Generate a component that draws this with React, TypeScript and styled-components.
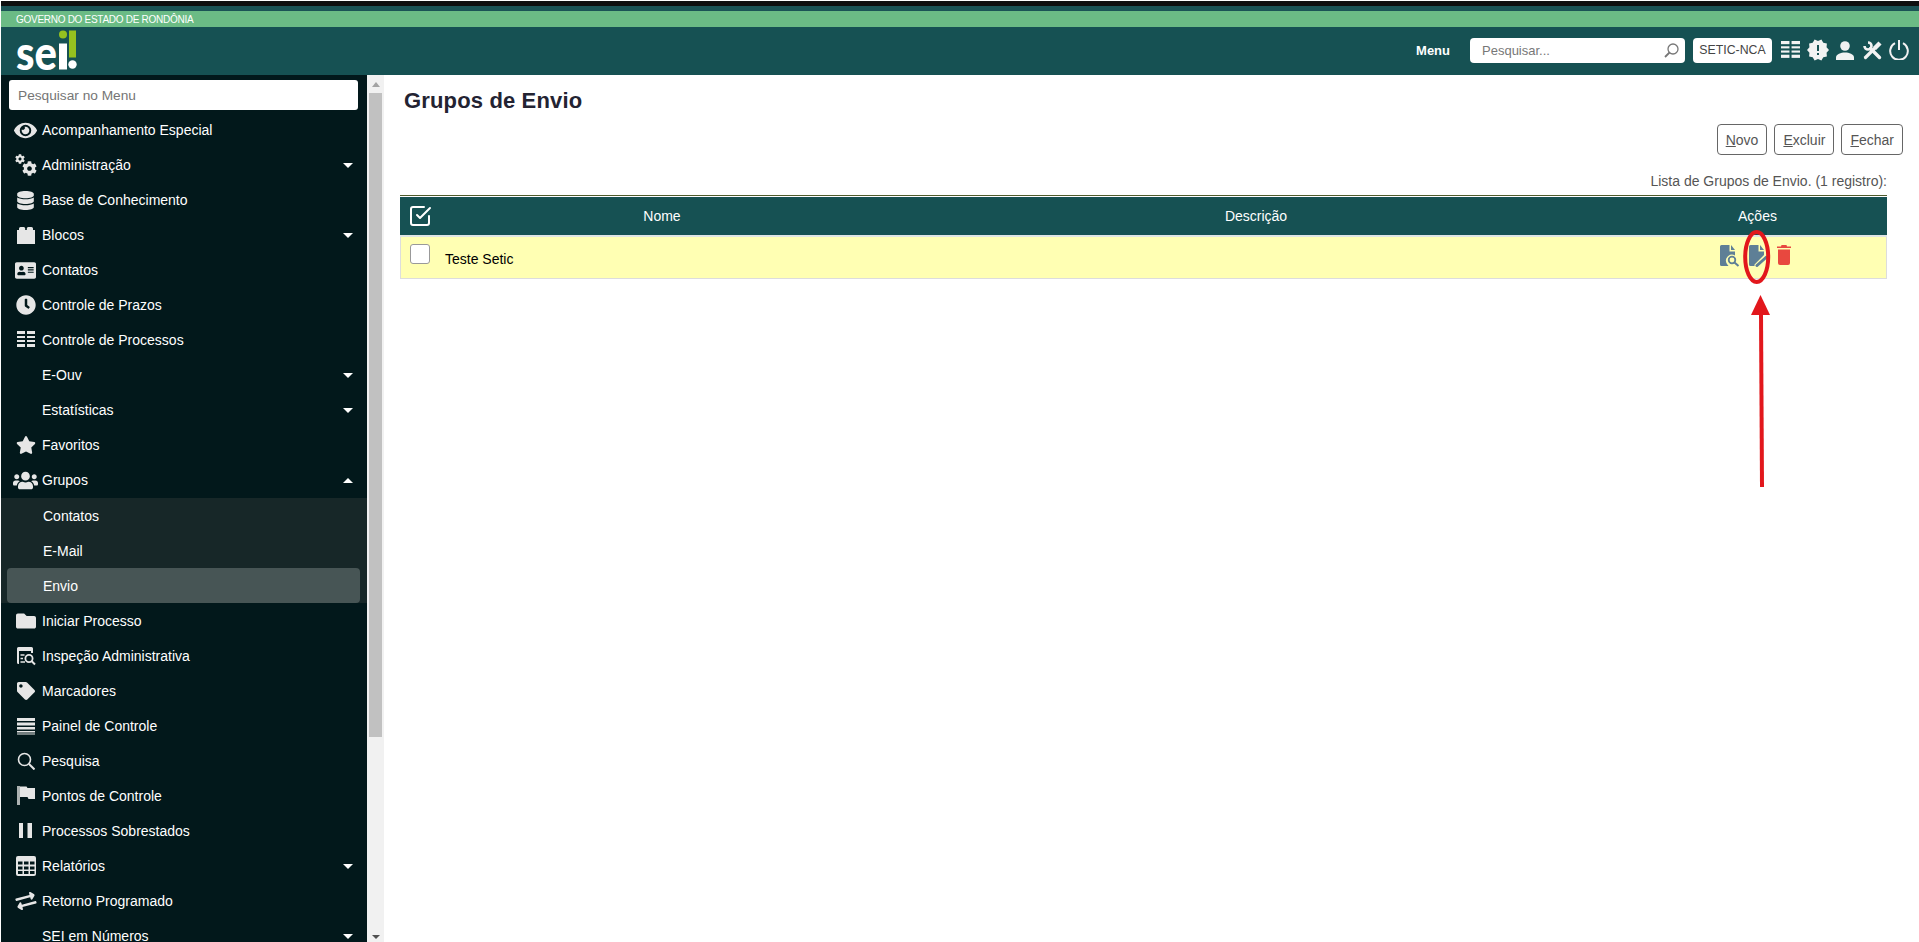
import React from "react";
import styled, { createGlobalStyle } from "styled-components";
import {
  FaAddressCard,
  FaClock,
  FaCog,
  FaDatabase,
  FaExchangeAlt,
  FaEye,
  FaFolder,
  FaStar,
  FaTag,
  FaUsers,
} from "react-icons/fa";
import { FiCheckSquare } from "react-icons/fi";
import { MdNewReleases } from "react-icons/md";

const GlobalStyle = createGlobalStyle`
  html, body {
    margin: 0;
    padding: 0;
    height: 100%;
    overflow: hidden;
    background: #fff;
    font-family: "Liberation Sans", Arial, sans-serif;
  }
  #root {
    height: 100%;
  }
`;

const Page = styled.div`
  height: 100vh;
  display: flex;
  flex-direction: column;
  padding: 1px 0 0 1px;
  box-sizing: border-box;
  overflow: hidden;
`;

const BlackStrip = styled.div`
  height: 5px;
  flex: none;
  background: #0f0f0f;
`;

const TealStrip = styled.div`
  height: 5px;
  flex: none;
  background: #1b5355;
`;

const GovBar = styled.div`
  height: 16px;
  flex: none;
  display: flex;
  align-items: center;
  padding-left: 15px;
  background: #6bbb85;
  color: #fff;
  font-size: 10px;
  letter-spacing: -0.28px;
`;

const Header = styled.header`
  height: 48px;
  flex: none;
  display: flex;
  align-items: center;
  padding: 0 10px 0 15px;
  background: #165153;
`;

const Logo = styled.svg`
  width: 62px;
  height: 42px;
  margin-top: -1px;
  overflow: visible;
`;

const HeaderRight = styled.div`
  margin-left: auto;
  margin-bottom: 2px;
  display: flex;
  align-items: center;
`;

const MenuLabel = styled.span`
  color: #fff;
  font-size: 13px;
  font-weight: 700;
  margin-right: 20px;
`;

const SearchBox = styled.div`
  width: 215px;
  height: 25px;
  box-sizing: border-box;
  display: flex;
  align-items: center;
  justify-content: space-between;
  padding: 0 6px 0 12px;
  background: #fff;
  border-radius: 4px;
  color: #777;
  font-size: 13px;
  margin-right: 8px;
`;

const Unit = styled.div`
  width: 79px;
  height: 25px;
  display: flex;
  align-items: center;
  justify-content: center;
  background: #fff;
  border-radius: 4px;
  color: #444;
  font-size: 12.3px;
  margin-right: 9px;
`;

const HeaderIcons = styled.div`
  display: flex;
  align-items: center;
  gap: 6px;
  color: #f2f2f2;
  height: 25px;
`;

const ToolsSvg = styled.svg`
  margin: 0 1px 0 3px;
`;

const Body = styled.div`
  flex: 1;
  min-height: 0;
  display: flex;
`;

const Sidebar = styled.nav`
  width: 366px;
  flex: none;
  box-sizing: border-box;
  padding-top: 5px;
  background: #02181b;
  overflow: hidden;
`;

const MenuSearch = styled.div`
  height: 30px;
  margin: 0 9px 2.5px 8px;
  box-sizing: border-box;
  display: flex;
  align-items: center;
  padding-left: 9px;
  background: #fff;
  border-radius: 3px;
  color: #757575;
  font-size: 13.7px;
`;

const MenuItem = styled.div<{ $active?: boolean; $sub?: boolean }>`
  height: 35.05px;
  display: flex;
  align-items: center;
  box-sizing: border-box;
  padding-right: 14px;
  padding-left: ${(p) => (p.$active ? 36 : p.$sub ? 42 : 12)}px;
  margin: 0 ${(p) => (p.$active ? 7 : 0)}px 0 ${(p) => (p.$active ? 6 : 0)}px;
  background: ${(p) => (p.$active ? "#475555" : "transparent")};
  border-radius: ${(p) => (p.$active ? 4 : 0)}px;
  color: #fff;
  font-size: 14px;
  white-space: nowrap;
`;

const MenuIcon = styled.span`
  width: 25px;
  height: 24px;
  margin-right: 4px;
  flex: none;
  display: flex;
  align-items: center;
  justify-content: center;
  color: #e6e6e6;
`;

const TiltedExchange = styled(FaExchangeAlt)`
  transform: rotate(-15deg);
`;

const Caret = styled.span<{ $up?: boolean }>`
  margin-left: auto;
  width: 0;
  height: 0;
  border-left: 5px solid transparent;
  border-right: 5px solid transparent;
  border-top: ${(p) => (p.$up ? "0" : "5px solid #fff")};
  border-bottom: ${(p) => (p.$up ? "5px solid #fff" : "0")};
`;

const SubMenu = styled.div`
  background: #172728;
`;

const ScrollTrack = styled.div`
  width: 17px;
  flex: none;
  display: flex;
  flex-direction: column;
  align-items: center;
  background: #f1f1f1;
`;

const ScrollArrow = styled.span<{ $down?: boolean }>`
  flex: none;
  width: 0;
  height: 0;
  margin: ${(p) => (p.$down ? "auto 0 3px" : "7px 0 6px")};
  border-left: 4px solid transparent;
  border-right: 4px solid transparent;
  border-top: ${(p) => (p.$down ? "4px solid #505050" : "0")};
  border-bottom: ${(p) => (p.$down ? "0" : "5px solid #a3a3a3")};
`;

const ScrollThumb = styled.div`
  width: 13px;
  height: 644px;
  flex: none;
  background: #c1c1c1;
`;

const Main = styled.main`
  position: relative;
  flex: 1;
  min-width: 0;
  box-sizing: border-box;
  padding: 0 32px 0 16px;
  color: #333;
`;

const Title = styled.h1`
  margin: 13px 0 0 4px;
  height: 26px;
  font-size: 22px;
  line-height: 26px;
  font-weight: 700;
  letter-spacing: 0.15px;
  color: #232332;
`;

const ButtonRow = styled.div`
  display: flex;
  justify-content: flex-end;
  gap: 7px;
  margin: 10px -16px 0 0;
`;

const Button = styled.button`
  height: 31px;
  box-sizing: border-box;
  padding: 0 8px;
  background: #fff;
  border: 1px solid #666;
  border-radius: 4px;
  color: #555;
  font-family: inherit;
  font-size: 14px;
  u {
    text-underline-offset: 1px;
  }
`;

const Caption = styled.div`
  margin-top: 17px;
  height: 18px;
  line-height: 18px;
  text-align: right;
  font-size: 14px;
  color: #555;
`;

const Table = styled.table`
  width: 100%;
  margin-top: 5px;
  border-collapse: separate;
  border-spacing: 0;
  table-layout: fixed;
  border-top: 1px solid #4f5b2c;
  padding-top: 1px;
`;

const HeadCell = styled.th`
  height: 40px;
  box-sizing: border-box;
  padding: 0 0 1px;
  background: #165153;
  color: #fff;
  font-size: 14px;
  font-weight: 400;
  border-bottom: 2px solid #dfe5e5;
`;

const RowCell = styled.td`
  height: 42px;
  box-sizing: border-box;
  padding: 0;
  background: #ffffb3;
  color: #000;
  font-size: 14px;
  border-bottom: 1px solid #ddd;
  &:first-child {
    border-left: 1px solid #ddd;
  }
  &:last-child {
    border-right: 1px solid #ddd;
  }
`;

const HeadCheck = styled.div`
  display: flex;
  padding-left: 8px;
  color: #fff;
`;

const RowCheck = styled.span`
  display: block;
  width: 20px;
  height: 20px;
  margin: -7px 0 0 9px;
  box-sizing: border-box;
  background: #fff;
  border: 1px solid #999;
  border-radius: 3px;
`;

const RowName = styled.div`
  padding: 2px 0 0 5px;
`;

const Actions = styled.div`
  display: flex;
  align-items: flex-start;
  gap: 9px;
  padding-left: 92px;
  margin-top: -4px;
  height: 22px;
`;

const Annotation = styled.svg`
  position: absolute;
  left: 1340px;
  top: 150px;
  pointer-events: none;
`;

type Item = {
  label: string;
  icon?: React.ReactNode;
  caret?: boolean;
};

const White = "#e6e6e6";
const Slate = "#5e7f96";
const Red = "#e2171c";

const GridIcon = ({ size = 18 }: { size?: number }) => (
  <svg width={size} height={size} viewBox="0 0 18 18" fill="currentColor">
    <rect x="0" y="0" width="8" height="3" />
    <rect x="10" y="0" width="8" height="3" />
    <rect x="0" y="5" width="8" height="2" />
    <rect x="10" y="5" width="8" height="2" />
    <rect x="0" y="9" width="8" height="2" />
    <rect x="10" y="9" width="8" height="2" />
    <rect x="0" y="13" width="8" height="3" />
    <rect x="10" y="13" width="8" height="3" />
  </svg>
);

const GearsIcon = () => (
  <svg width="22" height="22" viewBox="0 0 22 22" fill={White}>
    <FaCog x="0" y="0" size={10} />
    <FaCog x="7" y="7" size={15} />
  </svg>
);

const BlocksIcon = () => (
  <svg width="18" height="17" viewBox="0 0 18 17" fill={White}>
    <path d="M0 3h2V1.500A1.500 1.500 0 0 1 3.500 0h3.200A1.500 1.500 0 0 1 8.200 1.500V3h1.600V1.500A1.500 1.500 0 0 1 11.300 0h3.200A1.500 1.500 0 0 1 16 1.500V3h2v14H0z" />
  </svg>
);

const InspectIcon = () => (
  <svg width="20" height="20" viewBox="0 0 20 20" fill="none">
    <path d="M2.500 1H15.500A1.500 1.500 0 0 1 17 2.500V7H15V5H3V18H2.500A1.500 1.500 0 0 1 1 16.500V2.500A1.500 1.500 0 0 1 2.500 1z" fill={White} />
    <path d="M4.500 9h4M4.500 12.500h2.500M4.500 16h4.500" stroke={White} strokeWidth="1.600" />
    <circle cx="13" cy="12.500" r="3.600" stroke={White} strokeWidth="1.800" />
    <path d="M15.500 15l3.500 3.500" stroke={White} strokeWidth="2" />
  </svg>
);

const BarsIcon = () => (
  <svg width="18" height="18" viewBox="0 0 18 18" fill={White}>
    <rect x="0" y="1" width="18" height="3" />
    <rect x="0" y="5.500" width="18" height="3" />
    <rect x="0" y="10" width="18" height="2.500" />
    <rect x="0" y="14" width="18" height="1.500" />
    <rect x="0" y="16.500" width="18" height="1" />
  </svg>
);

const ThinSearchIcon = () => (
  <svg width="18" height="18" viewBox="0 0 18 18" fill="none" stroke={White}>
    <circle cx="7.500" cy="7.500" r="6" strokeWidth="1.600" />
    <path d="M12 12l5.500 5.500" strokeWidth="2" />
  </svg>
);

const HeaderSearchIcon = () => (
  <svg width="15" height="15" viewBox="0 0 15 15" fill="none" stroke="#777">
    <circle cx="9" cy="6" r="5" strokeWidth="1.300" />
    <path d="M5.500 9.500L1 14" strokeWidth="1.800" />
  </svg>
);

const FlagIcon = () => (
  <svg width="18" height="19" viewBox="0 0 18 19" fill={White}>
    <path d="M0 0h3v19H0z" opacity="0.75" />
    <path d="M3 .500h6.500l1 1.500H18v11h-6.500l-1-2H3z" />
  </svg>
);

const PauseIcon = () => (
  <svg width="13" height="15" viewBox="0 0 13 15" fill={White}>
    <rect x="0" y="0" width="4" height="15" />
    <rect x="8.500" y="0" width="4.500" height="15" />
  </svg>
);

const TableIcon = () => (
  <svg width="20" height="20" viewBox="0 0 20 20">
    <rect width="20" height="20" rx="2" fill={White} />
    {[5.500, 10.500, 15].map((y) =>
      [2, 8, 14].map((x) => <rect key={`${x}-${y}`} x={x} y={y} width="4.500" height="3" fill="#02181b" />)
    )}
  </svg>
);

const PersonIcon = () => (
  <svg width="18" height="19" viewBox="0 0 18 19" fill="currentColor">
    <circle cx="9" cy="5" r="4.800" />
    <path d="M0 19v-2.500C0 13 5 11.500 9 11.500s9 1.500 9 5V19z" />
  </svg>
);

const ToolsIcon = () => (
  <ToolsSvg width="19" height="19" viewBox="0 0 19 19" fill="none" stroke="currentColor">
    <path d="M1.500 5A3.500 3.500 0 1 0 5 1.500" strokeWidth="2.600" />
    <path d="M7.500 7.500l9 9" strokeWidth="3.400" strokeLinecap="round" />
    <path d="M2.500 16.500l9-9" strokeWidth="3.200" strokeLinecap="round" />
    <path d="M11.500 7.500L17 2" strokeWidth="4.400" />
  </ToolsSvg>
);

const PowerIcon = () => (
  <svg width="20" height="20" viewBox="0 0 20 20" fill="none" stroke="currentColor" strokeWidth="2">
    <path d="M6 3.200a8.800 8.800 0 1 0 8 0" />
    <path d="M10 0v10" />
  </svg>
);

const DocSearchIcon = () => (
  <svg width="20" height="22" viewBox="0 0 20 22" fill={Slate}>
    <path d="M1.500 0H9.500V6.500H15V10.500A6 6 0 0 0 7 19l1.500 2H1.500A1.500 1.500 0 0 1 0 19.500V1.500A1.500 1.500 0 0 1 1.500 0z" />
    <path d="M11 0l4 5h-4z" />
    <circle cx="12" cy="15" r="3.300" fill="none" stroke={Slate} strokeWidth="1.800" />
    <path d="M14.500 17.500l4 3.500" stroke={Slate} strokeWidth="2" />
  </svg>
);

const DocEditIcon = () => (
  <svg width="19" height="22" viewBox="0 0 19 22" fill={Slate}>
    <path d="M1.500 0H9.500V6.500H15V10L5.500 19.500V21H1.500A1.500 1.500 0 0 1 0 19.500V1.500A1.500 1.500 0 0 1 1.500 0z" />
    <path d="M11 0l4 5h-4z" />
    <path d="M8 20.500L17.500 12" stroke={Slate} strokeWidth="3" strokeLinecap="round" />
  </svg>
);

const TrashIcon = () => (
  <svg width="14" height="20" viewBox="0 0 14 20" fill="#e8483f">
    <path d="M4.500 0h5l.5 1.500h4V3H0V1.500h4z" />
    <path d="M1 4.500h12V18a2 2 0 0 1-2 2H3a2 2 0 0 1-2-2z" />
  </svg>
);

const topItems: Item[] = [
  { label: "Acompanhamento Especial", icon: <FaEye size={23} /> },
  { label: "Administração", icon: <GearsIcon />, caret: true },
  { label: "Base de Conhecimento", icon: <FaDatabase size={19} /> },
  { label: "Blocos", icon: <BlocksIcon />, caret: true },
  { label: "Contatos", icon: <FaAddressCard size={21} /> },
  { label: "Controle de Prazos", icon: <FaClock size={20} /> },
  { label: "Controle de Processos", icon: <GridIcon /> },
  { label: "E-Ouv", caret: true },
  { label: "Estatísticas", caret: true },
  { label: "Favoritos", icon: <FaStar size={20} /> },
];

const bottomItems: Item[] = [
  { label: "Iniciar Processo", icon: <FaFolder size={20} /> },
  { label: "Inspeção Administrativa", icon: <InspectIcon /> },
  { label: "Marcadores", icon: <FaTag size={18} /> },
  { label: "Painel de Controle", icon: <BarsIcon /> },
  { label: "Pesquisa", icon: <ThinSearchIcon /> },
  { label: "Pontos de Controle", icon: <FlagIcon /> },
  { label: "Processos Sobrestados", icon: <PauseIcon /> },
  { label: "Relatórios", icon: <TableIcon />, caret: true },
  { label: "Retorno Programado", icon: <TiltedExchange size={20} /> },
  { label: "SEI em Números", caret: true },
];

const Row = ({ item }: { item: Item }) => (
  <MenuItem>
    <MenuIcon>{item.icon}</MenuIcon>
    {item.label}
    {item.caret && <Caret />}
  </MenuItem>
);

export default function App() {
  return (
    <Page>
      <GlobalStyle />
      <BlackStrip />
      <TealStrip />
      <GovBar>GOVERNO DO ESTADO DE RONDÔNIA</GovBar>
      <Header>
        <Logo viewBox="0 0 62 42">
          <text
            x="0"
            y="39.500"
            fill="#fff"
            fontFamily="Lato, sans-serif"
            fontWeight="900"
            fontSize="48"
            textLength="41"
            lengthAdjust="spacingAndGlyphs"
          >
            se
          </text>
          <rect x="43" y="13.500" width="8" height="26" fill="#fff" />
          <circle cx="47" cy="4.500" r="4" fill="#95c11f" />
          <rect x="53" y="0.500" width="7" height="27" fill="#95c11f" />
          <circle cx="56.500" cy="34.500" r="4.200" fill="#fff" />
        </Logo>
        <HeaderRight>
          <MenuLabel>Menu</MenuLabel>
          <SearchBox>
            Pesquisar...
            <HeaderSearchIcon />
          </SearchBox>
          <Unit>SETIC-NCA</Unit>
          <HeaderIcons>
            <GridIcon size={19} />
            <MdNewReleases size={24} />
            <PersonIcon />
            <ToolsIcon />
            <PowerIcon />
          </HeaderIcons>
        </HeaderRight>
      </Header>
      <Body>
        <Sidebar>
          <MenuSearch>Pesquisar no Menu</MenuSearch>
          {topItems.map((item) => (
            <Row key={item.label} item={item} />
          ))}
          <MenuItem>
            <MenuIcon>
              <FaUsers size={25} />
            </MenuIcon>
            Grupos
            <Caret $up />
          </MenuItem>
          <SubMenu>
            <MenuItem $sub>Contatos</MenuItem>
            <MenuItem $sub>E-Mail</MenuItem>
            <MenuItem $sub $active>
              Envio
            </MenuItem>
          </SubMenu>
          {bottomItems.map((item) => (
            <Row key={item.label} item={item} />
          ))}
        </Sidebar>
        <ScrollTrack>
          <ScrollArrow />
          <ScrollThumb />
          <ScrollArrow $down />
        </ScrollTrack>
        <Main>
          <Title>Grupos de Envio</Title>
          <ButtonRow>
            <Button>
              <u>N</u>ovo
            </Button>
            <Button>
              <u>E</u>xcluir
            </Button>
            <Button>
              <u>F</u>echar
            </Button>
          </ButtonRow>
          <Caption>Lista de Grupos de Envio. (1 registro):</Caption>
          <Table>
            <colgroup>
              <col width="40" />
              <col width="444" />
              <col width="744" />
              <col width="259" />
            </colgroup>
            <thead>
              <tr>
                <HeadCell>
                  <HeadCheck>
                    <FiCheckSquare size={24} />
                  </HeadCheck>
                </HeadCell>
                <HeadCell>Nome</HeadCell>
                <HeadCell>Descrição</HeadCell>
                <HeadCell>Ações</HeadCell>
              </tr>
            </thead>
            <tbody>
              <tr>
                <RowCell>
                  <RowCheck />
                </RowCell>
                <RowCell>
                  <RowName>Teste Setic</RowName>
                </RowCell>
                <RowCell />
                <RowCell>
                  <Actions>
                    <DocSearchIcon />
                    <DocEditIcon />
                    <TrashIcon />
                  </Actions>
                </RowCell>
              </tr>
            </tbody>
          </Table>
          <Annotation width="60" height="270" viewBox="0 0 60 270" fill="none">
            <ellipse cx="32.700" cy="32" rx="11.500" ry="25" stroke={Red} strokeWidth="4" />
            <path d="M37 88L38 262" stroke={Red} strokeWidth="4" />
            <path d="M36.500 70L46 90H27z" fill={Red} />
          </Annotation>
        </Main>
      </Body>
    </Page>
  );
}
